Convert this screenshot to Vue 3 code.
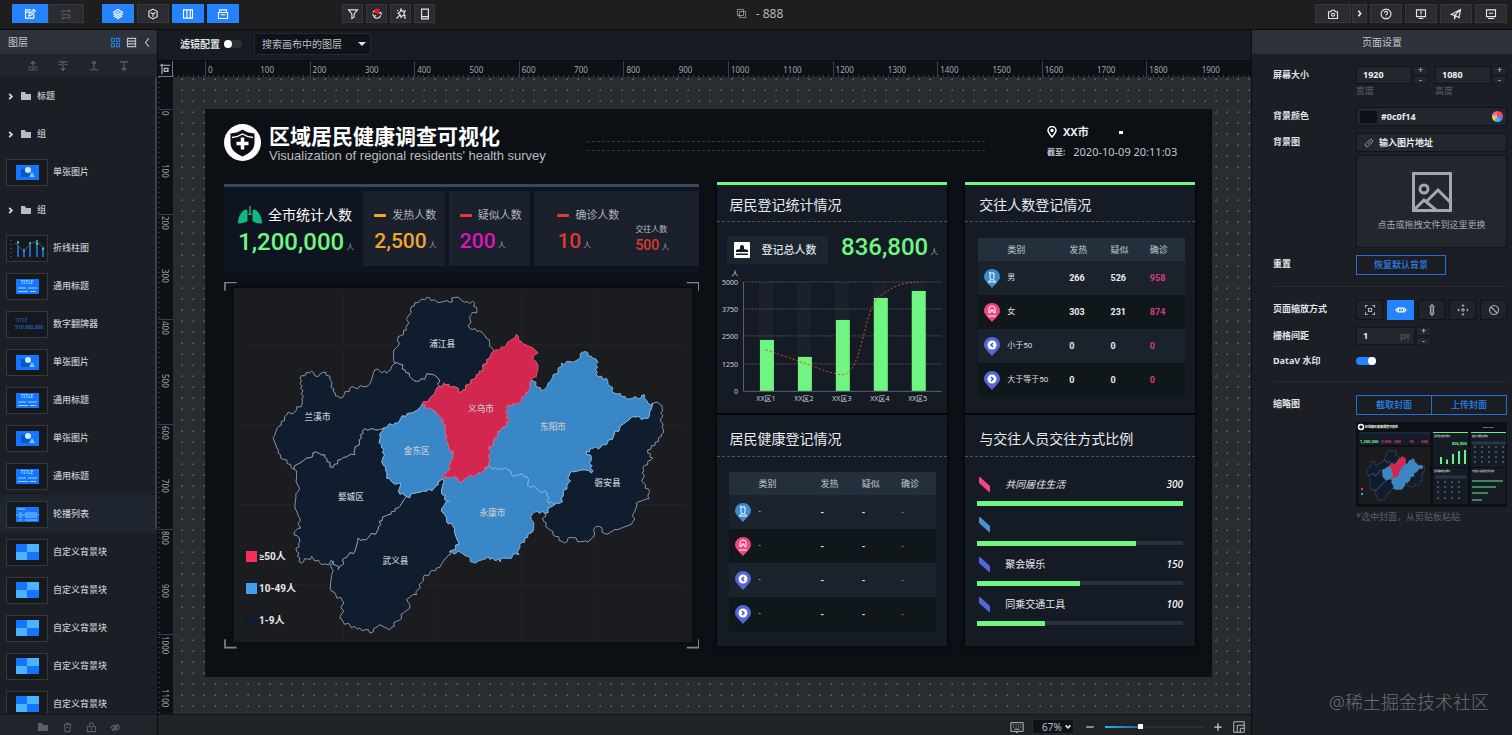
<script setup>
import { ref } from 'vue'

const icons = {
  edit: 'M13 8v5.5H2v-11h7M2 5.5h6M6 11l1-3 6-6 2 2-6 6-3 1',
  swap: 'M3 7V4h10l-2-2M13 9v4H3l2 2M3 9h10M13 4v2',
  layers: 'M8 2l6 3.5-6 3.5-6-3.500zM2 8l6 3.500 6-3.500M2 10.500l6 3.500 6-3.500M6 5.500h4',
  cube: 'M8 1.500l5.500 3v7L8 14.500l-5.500-3v-7zM5 6l3 2 3-2M8 8v4',
  columns: 'M2 2.500h12v11H2zM6.500 2.500v11M11 2.500v11',
  panel: 'M2 6h12v8H2zM3.500 6V2.500h9V6M5 9h6',
  funnel: 'M2 2.500h12L9.500 8v4L6.500 14V8z',
  sync: 'M3 6a5.500 5.500 0 0 1 8-3M13 10a5.500 5.500 0 0 1-9 2M2 8l2 3 3-1M14 9l-1-3-3 1',
  magic: 'M8 1.500l1.500 3 4-.5-2 3.500 2 3-3.500-.5-2 2.500-1-3.500L4 7l3-2zM6.500 9.500L2 14M3 3l1 1M12 12l2 2',
  tablet: 'M3.500 1.500h9v13h-9zM3.500 11.500h9',
  copy: 'M2 2h9v9H2zM5 5h9v9H5z',
  camera: 'M2 5h3l1-2h4l1 2h3v9H2zM8 7a2 2 0 1 0 .1 0',
  chevron: 'M6 3l4 5-4 5',
  help: 'M8 1.500a6.500 6.500 0 1 0 .1 0M6 6.500a2 2 0 1 1 3 1.700L8 9v1M8 11.500v1',
  alert: 'M2 2.500h12v9H2zM8 4v4M8 9v1M5 14h6',
  send: 'M1.500 8.500L14 2l-2 11-4-2.500zM14 2L6 10v4l2-3',
  screen: 'M2 2.500h12v9H2zM5 7h6M4 14h8',
  grid: 'M2 2h4.500v4.500H2zM9.500 2H14v4.500H9.500zM2 9.500h4.500V14H2zM9.500 9.500H14V14H9.500z',
  list: 'M2 2h12v12H2zM2 6h12M2 10h12',
  back: 'M10 2L5 8l5 6',
  toTop: 'M8 13V2M5 5l3-3 3 3M2 9.500h4M10 9.500h4M2 13h12',
  toBottom: 'M8 3v11M5 11l3 3 3-3M2 2.500h12M2 6h4M10 6h4',
  up: 'M8 12V2M5 5l3-3 3 3M2 13h12',
  down: 'M8 3v11M5 11l3 3 3-3M2 2.500h12',
  trash: 'M2 4h12M6 4V2h4v2M3.500 4l1 10h7l1-10M6.500 8h3',
  lock: 'M2 7h12v7H2zM5 7V4a3 3 0 0 1 6 0v3M8 9v3',
  hide: 'M1.500 8c3-5 10-5 13 0-3 5-10 5-13 0zM8 6a2 2 0 1 0 .1 0M3 13L13 3',
  link: 'M7 9l4-4M6 6l3-3a2.500 2.500 0 0 1 4 4l-3 3M10 10l-3 3a2.500 2.500 0 0 1-4-4l3-3',
  fit: 'M2 5V2h3M11 2h3v3M14 11v3h-3M5 14H2v-3M6 6h4v4H6z',
  width: 'M4.500 5L1 8l3.500 3M11.500 5L15 8l-3.500 3M4.500 5.500h7v5h-7zM8 7v2',
  height: 'M5 4l3-3 3 3M5 12l3 3 3-3M6 5h4v6H6zM8 7v2',
  spread: 'M6.500 3L8 1.500 9.500 3M6.500 13L8 14.500 9.500 13M3 6.500L1.500 8 3 9.500M13 6.500L14.500 8 13 9.500M8 6.500a1.500 1.500 0 1 0 .1 0',
  none: 'M8 2a6 6 0 1 0 .1 0M4 4l8 8',
  keyboard: 'M1 3h14v10H1zM3.500 5.500h1M6.500 5.500h1M9.500 5.500h1M12 5.500h1M3.500 8h1M6.500 8h1M9.500 8h1M12 8h1M5 10.500h6M7 14.500h2',
  minimap: 'M2 2h12v12H2zM6 14V6h8M9.500 14V9.500H14',
}

const leftTools = [
  { icon: 'layers', label: '图层', on: true },
  { icon: 'cube', label: '组件', on: false },
  { icon: 'columns', label: '右侧面板', on: true },
  { icon: 'panel', label: '工具栏', on: true },
]
const midTools = [
  { icon: 'funnel', label: '过滤' },
  { icon: 'sync', label: '同步', dot: true },
  { icon: 'magic', label: '效果' },
  { icon: 'tablet', label: '设备' },
]
const rightTools = [
  { icon: 'help', label: '帮助' },
  { icon: 'alert', label: '检查' },
  { icon: 'send', label: '发布' },
  { icon: 'screen', label: '预览' },
]

const layers = [
  ['group', '标题'], ['group', '组'], ['image', '单张图片'], ['group', '组'],
  ['chart', '折线柱图'], ['title', '通用标题'], ['digits', '数字翻牌器'], ['image', '单张图片'],
  ['title', '通用标题'], ['image', '单张图片'], ['title', '通用标题'], ['list', '轮播列表'],
  ['block', '自定义背景块'], ['block', '自定义背景块'], ['block', '自定义背景块'],
  ['block', '自定义背景块'], ['block', '自定义背景块'],
].map(([kind, name]) => ({ kind, name }))

const hTicks = Array.from({ length: 20 }, (_, i) => i * 100)
const vTicks = Array.from({ length: 12 }, (_, i) => i * 100)

const regionData = [
  { name: '浦江县', tone: 'dark', at: [667, 208], pts: '525,265 522,225 540,205 535,185 560,165 568,120 575,95 600,78 620,68 650,80 690,82 705,68 735,82 765,85 772,105 750,125 750,160 780,168 800,190 810,205 823,228 800,255 790,280 770,300 725,352 700,335 672,325 660,335 655,310 630,298 600,318 575,310 555,285 540,268' },
  { name: '兰溪市', tone: 'dark', at: [293, 425], pts: '525,265 540,268 555,285 575,310 600,318 630,298 655,310 660,335 640,362 607,388 570,415 525,445 490,460 460,462 435,462 418,495 405,540 370,548 340,578 320,560 315,540 290,532 260,550 222,583 175,535 160,488 175,455 200,420 230,405 248,380 240,310 275,288 295,305 318,292 335,320 340,350 360,370 390,340 445,332 465,285 500,295 515,275' },
  { name: '婺城区', tone: 'dark', at: [393, 668], pts: '222,583 260,550 290,532 315,540 320,560 340,578 370,548 405,540 418,495 435,462 460,462 490,460 480,480 485,510 495,540 490,570 500,610 520,625 542,625 540,658 560,665 535,700 505,720 478,740 475,765 440,795 415,790 405,830 375,850 355,885 340,860 305,870 275,845 245,865 230,830 240,800 222,780 243,760 225,700 235,650 230,610' },
  { name: '武义县', tone: 'dark', at: [527, 860], pts: '560,665 620,650 655,630 668,612 668,660 688,680 665,710 680,740 705,760 718,810 690,830 680,850 650,880 610,910 590,960 560,975 570,1000 530,1040 510,1065 480,1050 460,1072 420,1060 395,1060 360,1030 372,985 335,950 335,880 340,860 355,885 375,850 405,830 415,790 440,795 475,765 478,740 505,720 535,700' },
  { name: '磐安县', tone: 'dark', at: [1164, 625], pts: '1300,385 1315,382 1328,400 1325,430 1332,465 1325,485 1285,525 1300,550 1270,580 1272,625 1290,650 1288,672 1250,685 1240,740 1195,765 1165,778 1130,755 1125,775 1105,802 1045,790 1035,805 1000,780 972,740 975,715 1010,685 1020,685 1030,665 1045,625 1055,590 1095,585 1115,595 1115,550 1100,530 1120,520 1160,510 1200,460 1240,425 1275,430 1290,420' },
  { name: '金东区', tone: 'blue', at: [591, 530], pts: '607,388 640,405 665,430 678,450 678,480 685,510 700,540 690,580 668,612 655,630 620,650 560,665 540,658 542,625 520,625 500,610 490,570 495,540 485,510 480,480 490,460 525,445 570,415' },
  { name: '永康市', tone: 'blue', at: [818, 715], pts: '668,612 705,605 727,622 745,605 770,600 795,585 805,575 865,585 875,600 922,605 925,632 982,655 988,685 1010,685 975,715 945,712 935,735 940,770 900,810 898,840 850,850 842,862 805,845 768,865 730,838 690,830 718,810 705,760 680,740 665,710 688,680 668,660' },
  { name: '东阳市', tone: 'blue', at: [1000, 458], pts: '935,315 965,348 985,325 1000,300 1015,295 1025,265 1060,262 1098,230 1120,250 1135,262 1130,300 1165,320 1185,355 1230,372 1265,368 1275,360 1285,385 1300,385 1290,420 1275,430 1240,425 1200,460 1160,510 1120,520 1100,530 1115,550 1115,595 1095,585 1055,590 1045,625 1030,665 1020,685 1010,685 988,685 982,655 925,632 922,605 875,600 865,585 805,575 795,585 810,560 808,525 825,490 845,460 870,440 860,430 860,395 895,385 925,350' },
  { name: '义乌市', tone: 'red', at: [784, 403], pts: '823,228 860,210 890,178 905,200 930,215 955,235 940,255 955,280 950,305 935,315 925,350 895,385 860,395 860,430 870,440 845,460 825,490 808,525 810,560 795,585 770,600 745,605 727,622 705,605 668,612 690,580 700,540 685,510 678,480 678,450 665,430 640,405 607,388 640,362 660,335 672,325 700,335 725,352 770,300 790,280 800,255' },
]

// Roughens a straight border. Both neighbours of an edge get the same line.
function roughen(a, b) {
  const flip = a[0] > b[0] || (a[0] === b[0] && a[1] > b[1])
  const [p, q] = flip ? [b, a] : [a, b]
  const dx = q[0] - p[0]
  const dy = q[1] - p[1]
  const len = Math.hypot(dx, dy)
  const n = Math.max(1, Math.round(len / 8))
  const out = []
  for (let i = 1; i < n; i++) {
    const h = Math.abs(Math.sin(p[0] * 12.9 + p[1] * 78.2 + i * 37.7) * 43758.5) % 1
    const off = (h - 0.5) * 12
    out.push([p[0] + (dx * i) / n - (dy / len) * off, p[1] + (dy * i) / n + (dx / len) * off])
  }
  return flip ? out.reverse() : out
}
function toPath(text) {
  const pts = text.split(' ').map((s) => s.split(',').map(Number))
  const all = pts.flatMap((p, i) => [p, ...roughen(p, pts[(i + 1) % pts.length])])
  return 'M' + all.map((p) => p.map((v) => Math.round(v)).join(' ')).join('L') + 'Z'
}
const regions = regionData.map((r) => ({ ...r, d: toPath(r.pts) }))

const legend = [
  { tone: 'red', label: '≥50人' },
  { tone: 'blue', label: '10-49人' },
  { tone: 'dark', label: '1-9人' },
]

const stats = [
  { label: '发热人数', value: '2,500', tone: 'amber' },
  { label: '疑似人数', value: '200', tone: 'magenta' },
]

const bars = [
  { x: 49, h: 51, name: 'XX区1' },
  { x: 87, h: 34, name: 'XX区2' },
  { x: 125, h: 71, name: 'XX区3' },
  { x: 163, h: 93, name: 'XX区4' },
  { x: 201, h: 100, name: 'XX区5' },
]
const gridLines = [
  { y: 14, v: 5000 }, { y: 41, v: 3750 }, { y: 68, v: 2500 }, { y: 96, v: 1250 }, { y: 123, v: 0 },
]

const pins = ['male', 'female', 'less', 'more']
const contactRows = [
  ['男', '266', '526', '958'],
  ['女', '303', '231', '874'],
  ['小于50', '0', '0', '0'],
  ['大于等于50', '0', '0', '0'],
]
const healthRows = Array.from({ length: 4 }, () => ['-', '-', '-', '-'])

const ways = [
  { name: '共同居住生活', value: '300', pct: 100, tone: 'pink', slant: true },
  { name: '', value: '', pct: 77, tone: 'sky' },
  { name: '聚会娱乐', value: '150', pct: 50, tone: 'indigo' },
  { name: '同乘交通工具', value: '100', pct: 33, tone: 'indigo' },
]

const scaleModes = [
  { icon: 'fit', label: '全屏铺满' },
  { icon: 'width', label: '等比缩放宽度铺满', on: true },
  { icon: 'height', label: '等比缩放高度铺满' },
  { icon: 'spread', label: '等比缩放居中' },
  { icon: 'none', label: '不缩放' },
]

const filterOn = ref(false)
const markOn = ref(true)
const zoom = ref(35)
const thumbBars = [14, 9, 20, 26, 28]
</script>

<template>
  <div class="app">
    <header class="topbar">
      <div class="tb-left">
        <div class="seg">
          <button class="tool wide on" aria-label="编辑"><svg class="ic" viewBox="0 0 16 16"><path :d="icons.edit" /></svg></button>
          <button class="tool wide dim" aria-label="切换"><svg class="ic" viewBox="0 0 16 16"><path :d="icons.swap" /></svg></button>
        </div>
        <div class="tools">
          <button v-for="t in leftTools" :key="t.icon" class="tool" :class="{ on: t.on }" :aria-label="t.label">
            <svg class="ic" viewBox="0 0 16 16"><path :d="icons[t.icon]" /></svg>
          </button>
        </div>
        <div class="tools mid">
          <button v-for="t in midTools" :key="t.icon" class="tool small" :aria-label="t.label">
            <svg class="ic" viewBox="0 0 16 16"><path :d="icons[t.icon]" /><circle v-if="t.dot" cx="8" cy="4" r="3.500" class="alert-dot" /></svg>
          </button>
        </div>
      </div>
      <div class="doc"><svg class="ic" viewBox="0 0 16 16"><path :d="icons.copy" /></svg><span>- 888</span></div>
      <div class="tb-right">
        <div class="seg split">
          <button class="tool wide" aria-label="截图"><svg class="ic" viewBox="0 0 16 16"><path :d="icons.camera" /></svg></button>
          <button class="tool narrow" aria-label="更多"><svg class="ic bold" viewBox="0 0 16 16"><path :d="icons.chevron" /></svg></button>
        </div>
        <button v-for="t in rightTools" :key="t.icon" class="tool" :aria-label="t.label">
          <svg class="ic" viewBox="0 0 16 16"><path :d="icons[t.icon]" /></svg>
        </button>
      </div>
    </header>

    <div class="work">
      <aside class="layers">
        <div class="panel-head">
          <span>图层</span>
          <div class="head-icons">
            <button class="bare active" aria-label="缩略图模式"><svg class="ic" viewBox="0 0 16 16"><path :d="icons.grid" /></svg></button>
            <button class="bare" aria-label="列表模式"><svg class="ic" viewBox="0 0 16 16"><path :d="icons.list" /></svg></button>
            <button class="bare" aria-label="收起"><svg class="ic" viewBox="0 0 16 16"><path :d="icons.back" /></svg></button>
          </div>
        </div>
        <div class="order">
          <button v-for="k in ['toTop', 'toBottom', 'up', 'down']" :key="k" class="bare" :aria-label="k">
            <svg class="ic" viewBox="0 0 16 16"><path :d="icons[k]" /></svg>
          </button>
        </div>
        <ul class="layer-list">
          <li v-for="(l, i) in layers" :key="i" :class="['layer', { current: l.kind === 'list' }]">
            <template v-if="l.kind === 'group'">
              <svg class="caret" viewBox="0 0 6 10"><path d="M1 2l3 3-3 3" /></svg>
              <svg class="folder" viewBox="0 0 12 10"><path d="M1 1h4l1 2h5v6H1z" /></svg>
            </template>
            <svg v-else class="thumb" viewBox="0 0 42 27">
              <rect x="0.500" y="0.500" width="41" height="26" class="thumb-box" />
              <g v-if="l.kind === 'image'">
                <rect x="10" y="6" width="23" height="15" fill="#1476ff" />
                <rect x="15" y="10" width="9" height="8" fill="#0a56c8" />
                <circle cx="22" cy="11" r="3" fill="#c9ecff" /><path d="M23 18l3-5 3 5z" fill="#7cc8ff" />
              </g>
              <g v-else-if="l.kind === 'title'">
                <rect x="10" y="6" width="23" height="15" fill="#1476ff" />
                <text x="21" y="11" class="tiny">TITLE</text>
                <path d="M12 15h8M22 15h9M12 18.500h10M24 18.500h6" stroke="#9ed4ff" />
              </g>
              <g v-else-if="l.kind === 'list'">
                <rect x="10" y="6" width="23" height="15" fill="#1476ff" />
                <path d="M11 8h8M13 12h3M19 12h12M13 16h3M19 16h12M13 19h3M19 19h12" stroke="#8ecbff" />
                <path d="M10 14h23" stroke="#41a3ff" stroke-width="2" />
              </g>
              <g v-else-if="l.kind === 'digits'">
                <text x="9" y="11" class="tiny blue">TITLE</text><text x="9" y="18" class="tiny blue bigger">510 000,000</text>
              </g>
              <g v-else-if="l.kind === 'chart'">
                <path d="M5 5v17" stroke="#66707a" stroke-dasharray="1 3" />
                <path d="M12 10v12M18 15v7M24 8v14M31 6v16M37 13v9" stroke="#1b82ee" stroke-width="1.500" />
                <path d="M12 6v3M24 7v3M31 5v5M18 14v3M37 12v3" stroke="#63dcb2" stroke-width="1.500" />
                <path d="M9 8l3 3 6 5 6-7 7-3 6 7" stroke="#35566d" fill="none" />
              </g>
              <g v-else>
                <path d="M10 5h11v8H10zM21 13h12v8H21z" fill="#1476ff" />
                <path d="M21 5h12v8H21zM10 13h11v8H10z" fill="#4bb3ff" />
              </g>
            </svg>
            <span>{{ l.name }}</span>
          </li>
        </ul>
        <div class="layer-foot">
          <button class="bare" aria-label="成组"><svg class="folder" viewBox="0 0 12 10"><path d="M1 1h4l1 2h5v6H1z" /></svg></button>
          <button v-for="k in ['trash', 'lock', 'hide']" :key="k" class="bare" :aria-label="k">
            <svg class="ic" viewBox="0 0 16 16"><path :d="icons[k]" /></svg>
          </button>
        </div>
      </aside>

      <main class="center">
        <div class="filterbar">
          <label class="filter-label">滤镜配置<input v-model="filterOn" class="switch" type="checkbox" /></label>
          <div class="pick">
            <select aria-label="搜索画布中的图层"><option>搜索画布中的图层</option></select>
            <svg viewBox="0 0 10 6"><path d="M1 1h8L5 5z" /></svg>
          </div>
        </div>
        <div class="stage">
          <div class="corner"><svg class="ic" viewBox="0 0 16 16"><path d="M1 3h14M4 1v14M7 6v6M12 6v6M7 9c1-3 4-3 5 0-1 3-4 3-5 0" /></svg></div>
          <div class="hruler"><div class="htrack"><span v-for="n in hTicks" :key="n" :class="{ major: n % 200 === 0 }">{{ n }}</span></div></div>
          <div class="vruler"><div class="vtrack"><span v-for="n in vTicks" :key="n" :class="{ major: n % 200 === 0 }">{{ n }}</span></div></div>
          <div class="canvas">
            <article class="board">
              <header class="b-head">
                <svg class="logo" viewBox="0 0 37 37">
                  <circle cx="18.500" cy="18.500" r="18.500" fill="#fff" />
                  <path d="M18.500 5.500c4 3 8 3.500 12 4v9c0 7-5 11-12 14-7-3-12-7-12-14v-9c4-.5 8-1 12-4z" fill="#0c0f14" />
                  <path d="M8 13.500c4-.5 7.500-1.500 10.500-3.500 3 2 6.500 3 10.500 3.500" fill="none" stroke="#fff" stroke-width="1.500" />
                  <path d="M18.500 13.500v12M12.500 19.500h12" stroke="#fff" stroke-width="3.500" />
                </svg>
                <div class="titles">
                  <h1>区域居民健康调查可视化</h1>
                  <p>Visualization of regional residents' health survey</p>
                </div>
                <div class="dots"></div>
                <div class="place">
                  <p class="city"><svg viewBox="0 0 10 12"><path d="M5 11C2 7.500 1 6 1 4.500a4 4 0 0 1 8 0C9 6 8 7.500 5 11z" /><circle cx="5" cy="4.500" r="1" /></svg><b>XX市</b><i></i></p>
                  <p class="until"><b>截至:</b><span>2020-10-09 20:11:03</span></p>
                </div>
              </header>

              <div class="b-body">
                <div class="col-main">
                  <section class="stats">
                    <div class="total">
                      <p class="total-label">
                        <svg viewBox="0 0 24 18"><path d="M9.500 5v10c-1 1-4 2-8 2.500-1 .2-1.500-.2-1.500-1C0 12 3 6 6 4c2-1 3.500-.5 3.500 1zM14.500 5v10c1 1 4 2 8 2.500 1 .2 1.500-.2 1.500-1C24 12 21 6 18 4c-2-1-3.500-.5-3.500 1zM11.300 0h1.400v7l1.500 2h-4.400l1.500-2z" /></svg>
                        全市统计人数
                      </p>
                      <p class="num green big">1,200,000<small>人</small></p>
                    </div>
                    <div v-for="s in stats" :key="s.label" class="stat">
                      <p class="stat-label" :class="s.tone"><i></i>{{ s.label }}</p>
                      <p class="num" :class="s.tone">{{ s.value }}<small>人</small></p>
                    </div>
                    <div class="stat last">
                      <div>
                        <p class="stat-label red"><i></i>确诊人数</p>
                        <p class="num red">10<small>人</small></p>
                      </div>
                      <div class="sub">
                        <p>交往人数</p>
                        <p class="num red mini">500<small>人</small></p>
                      </div>
                    </div>
                  </section>
                  <section class="mapbox">
                    <svg class="map" viewBox="12 21 1428 1101">
                      <rect x="39" y="37" width="1382" height="1068" class="map-bg" />
                      <path class="map-grid" d="M80 210H1400M50 450H1400M50 690H1400M80 930H1400M370 45V1100M655 45V1100M905 45V1100M1125 45V1100" />
                      <path v-for="r in regions" :key="r.name" :d="r.d" :class="['region', r.tone]" />
                      <text v-for="r in regions" :key="r.name + 't'" :x="r.at[0]" :y="r.at[1] + 9" class="region-name">{{ r.name }}</text>
                      <path class="corner-lines" d="M15 47V22H50M1402 22H1438V47M15 1094V1119H50M1402 1119H1438V1094" />
                    </svg>
                    <ul class="legend">
                      <li v-for="g in legend" :key="g.label"><i :class="g.tone"></i>{{ g.label }}</li>
                    </ul>
                  </section>
                </div>

                <div class="col-side">
                  <section class="card top">
                    <h2>居民登记统计情况</h2>
                    <div class="sum">
                      <div class="sum-tag">
                        <svg viewBox="0 0 16 16"><rect width="16" height="16" rx="1" fill="#fff" /><path d="M2 10V8l4-1V5a2 2 0 1 1 4 0v2l4 1v2zM2 11.500h12v1.500H2z" fill="#131a24" /></svg>
                        登记总人数
                      </div>
                      <p class="num green big">836,800<small>人</small></p>
                    </div>
                    <svg class="chart" viewBox="0 0 230 137">
                      <rect v-for="b in bars" :key="'s' + b.x" :x="b.x - 7" y="14" width="14" height="109" class="shade" />
                      <path v-for="g in gridLines.slice(0, 4)" :key="'l' + g.v" :d="`M26 ${g.y}H225`" class="gline" />
                      <path d="M26.500 14v109.500H225" class="axis" />
                      <rect v-for="b in bars" :key="b.x" :x="b.x - 6" :y="123 - b.h" width="14" :height="b.h" class="bar" />
                      <path d="M49 82C62 86 75 91 87 95C100 100 112 105 125 107C147 107 146 35 165 27C177 17 190 14 202 14" class="trend" />
                      <text v-for="g in gridLines" :key="g.v" x="21" :y="g.y + 3" text-anchor="end">{{ g.v }}</text>
                      <text v-for="b in bars" :key="b.name" :x="b.x" y="133" text-anchor="middle">{{ b.name }}</text>
                      <text x="18" y="8" text-anchor="middle">人</text>
                    </svg>
                  </section>
                  <section class="card">
                    <h2>居民健康登记情况</h2>
                    <table class="data">
                      <thead><tr><th>类别</th><th>发热</th><th>疑似</th><th>确诊</th></tr></thead>
                      <tbody>
                        <tr v-for="(row, i) in healthRows" :key="i">
                          <td><div class="cat">
                            <svg viewBox="0 0 16 19" :class="pins[i]">
                              <path class="pin" d="M8 19C3 13.500 0 11 0 8a8 8 0 0 1 16 0c0 3-3 5.500-8 11z" />
                              <path v-if="i === 0" class="sign" d="M5 3l1 1h4v5a2 2 0 0 1-4 0V4M4 13h8M6 11l-1 2M10 11l1 2" />
                              <path v-else-if="i === 1" class="sign" d="M5 10V6a3 3 0 0 1 6 0v4l-2-1V7H7v2zM4 13h8" />
                              <g v-else><circle cx="8" cy="8" r="4.500" fill="#fff" /><path class="arrow" :d="i === 2 ? 'M9 6L7 8l2 2' : 'M7 6l2 2-2 2'" /></g>
                            </svg>{{ row[0] }}</div></td>
                          <td>{{ row[1] }}</td><td>{{ row[2] }}</td><td>{{ row[3] }}</td>
                        </tr>
                      </tbody>
                    </table>
                  </section>
                </div>

                <div class="col-side">
                  <section class="card top">
                    <h2>交往人数登记情况</h2>
                    <table class="data">
                      <thead><tr><th>类别</th><th>发热</th><th>疑似</th><th>确诊</th></tr></thead>
                      <tbody>
                        <tr v-for="(row, i) in contactRows" :key="i">
                          <td><div class="cat">
                            <svg viewBox="0 0 16 19" :class="pins[i]">
                              <path class="pin" d="M8 19C3 13.500 0 11 0 8a8 8 0 0 1 16 0c0 3-3 5.500-8 11z" />
                              <path v-if="i === 0" class="sign" d="M5 3l1 1h4v5a2 2 0 0 1-4 0V4M4 13h8M6 11l-1 2M10 11l1 2" />
                              <path v-else-if="i === 1" class="sign" d="M5 10V6a3 3 0 0 1 6 0v4l-2-1V7H7v2zM4 13h8" />
                              <g v-else><circle cx="8" cy="8" r="4.500" fill="#fff" /><path class="arrow" :d="i === 2 ? 'M9 6L7 8l2 2' : 'M7 6l2 2-2 2'" /></g>
                            </svg>{{ row[0] }}</div></td>
                          <td>{{ row[1] }}</td><td>{{ row[2] }}</td><td>{{ row[3] }}</td>
                        </tr>
                      </tbody>
                    </table>
                  </section>
                  <section class="card">
                    <h2>与交往人员交往方式比例</h2>
                    <ul class="ways">
                      <li v-for="(w, i) in ways" :key="i">
                        <div class="way-row" :class="{ slant: w.slant }">
                          <svg viewBox="0 0 11 15" :class="w.tone"><path d="M0 0h1l10 9v6h-1L0 6z" /></svg>
                          <span>{{ w.name }}</span><em>{{ w.value }}</em>
                        </div>
                        <div class="way-bar"><i :style="{ width: w.pct + '%' }"></i></div>
                      </li>
                    </ul>
                  </section>
                </div>
              </div>
            </article>
          </div>
        </div>
        <footer class="zoombar">
          <button class="bare" aria-label="快捷键"><svg class="ic" viewBox="0 0 16 16"><path :d="icons.keyboard" /></svg></button>
          <div class="pick zoom-pick">
            <select aria-label="缩放比例"><option>67%</option></select>
            <svg viewBox="0 0 10 6"><path d="M2 1l3 3 3-3" class="open" /></svg>
          </div>
          <button class="bare sign-btn" aria-label="缩小"><svg class="ic" viewBox="0 0 16 16"><path d="M2 8h12" /></svg></button>
          <input v-model="zoom" class="range" type="range" min="0" max="100" aria-label="缩放" />
          <button class="bare sign-btn" aria-label="放大"><svg class="ic" viewBox="0 0 16 16"><path d="M2 8h12M8 2v12" /></svg></button>
          <button class="bare" aria-label="小地图"><svg class="ic" viewBox="0 0 16 16"><path :d="icons.minimap" /></svg></button>
        </footer>
      </main>

      <aside class="props">
        <div class="props-head">页面设置</div>
        <form class="form" @submit.prevent>
          <div class="row">
            <label for="w">屏幕大小</label>
            <div class="sizes">
              <div class="size">
                <div class="numbox"><input id="w" value="1920" /><span class="steps"><button type="button" aria-label="增加">+</button><button type="button" aria-label="减少">-</button></span></div>
                <small>宽度</small>
              </div>
              <div class="size">
                <div class="numbox"><input value="1080" aria-label="高度" /><span class="steps"><button type="button" aria-label="增加">+</button><button type="button" aria-label="减少">-</button></span></div>
                <small>高度</small>
              </div>
            </div>
          </div>
          <div class="row gap-l">
            <label for="bg">背景颜色</label>
            <div class="field"><i class="swatch"></i><input id="bg" value="#0c0f14" /><i class="wheel"></i></div>
          </div>
          <div class="row">
            <label for="img">背景图</label>
            <div class="stack">
              <div class="field link"><svg class="ic" viewBox="0 0 16 16"><path :d="icons.link" /></svg><input id="img" placeholder="输入图片地址" /></div>
              <button type="button" class="drop">
                <svg viewBox="0 0 40 40"><path d="M1.500 1.500h37v37h-37zM2 38l10-10 12 10M14 30l12-12 12 12" /><circle cx="12" cy="17" r="4" /></svg>
                点击或拖拽文件到这里更换
              </button>
            </div>
          </div>
          <div class="row">
            <span class="name">重置</span>
            <button type="button" class="outline reset">恢复默认背景</button>
          </div>
          <hr />
          <div class="row">
            <span class="name">页面缩放方式</span>
            <div class="modes">
              <button v-for="m in scaleModes" :key="m.icon" type="button" :class="{ on: m.on }" :aria-label="m.label">
                <svg class="ic" viewBox="0 0 16 16"><path :d="icons[m.icon]" /></svg>
              </button>
            </div>
          </div>
          <div class="row">
            <label for="grid">栅格间距</label>
            <div class="numbox spacing"><input id="grid" value="1" /><span class="unit">px</span><span class="steps"><button type="button" aria-label="增加">+</button><button type="button" aria-label="减少">-</button></span></div>
          </div>
          <div class="row">
            <label for="mark">DataV 水印</label>
            <input id="mark" v-model="markOn" class="switch mark" type="checkbox" />
          </div>
          <hr class="second" />
          <div class="row">
            <span class="name">缩略图</span>
            <div class="stack cover">
              <div class="pair"><button type="button" class="outline">截取封面</button><button type="button" class="outline">上传封面</button></div>
              <svg class="preview" viewBox="0 0 151 85">
                <rect width="151" height="85" fill="#0c0f14" />
                <circle cx="5" cy="5" r="2.500" fill="none" stroke="#fff" stroke-width="1.500" />
                <text x="9" y="6" class="pv-title">区域居民健康调查可视化</text>
                <text x="127" y="6" class="pv-text">2020-10-09</text>
                <path d="M3 11h71" stroke="#2d4257" /><rect x="3" y="12" width="71" height="11" fill="#151b28" />
                <text x="4" y="21" class="pv-num">1,200,000</text>
                <text x="25" y="21" class="pv-num pk">2,500</text><text x="38" y="21" class="pv-num pk">200</text>
                <text x="53" y="21" class="pv-num pk">10</text><text x="65" y="21" class="pv-num pk">500</text>
                <rect x="3" y="25" width="71" height="57" fill="#1a1b1f" />
                <svg x="3" y="26" width="71" height="55" viewBox="12 21 1428 1101"><path v-for="r in regions" :key="r.name" :d="r.d" :class="['region', r.tone]" /></svg>
                <path d="M5 67h2" stroke="#f72e5c" stroke-width="2" /><path d="M5 72h2" stroke="#439fed" stroke-width="2" />
                <g v-for="x in [77, 115]" :key="x">
                  <rect :x="x" y="10" width="35" height="35" fill="#151c26" /><rect :x="x" y="46" width="35" height="36" fill="#151c26" />
                  <path :d="`M${x} 10.500h35`" stroke="#6ff081" />
                </g>
                <text x="78" y="15" class="pv-text">居民登记统计情况</text><text x="116" y="15" class="pv-text">交往人数登记情况</text>
                <text x="78" y="50" class="pv-text">居民健康登记情况</text><text x="116" y="50" class="pv-text">与交往人员交往方式比例</text>
                <text x="96" y="23" class="pv-num">836,800</text>
                <rect v-for="(h, i) in thumbBars" :key="i" :x="84 + i * 6" :y="42 - h / 2" width="2" :height="h / 2" fill="#6ff081" />
                <path d="M116 21h34M79 55h31" stroke="#2a3443" stroke-width="3" />
                <path d="M118 25h31M118 30h31M118 35h31M118 40h31M81 60h28M81 65h28M81 70h28M81 76h28" stroke="#7b8795" stroke-dasharray="2 5" />
                <path d="M116 59h31M116 65h24M116 71h16M116 78h10" stroke="#6ff081" />
              </svg>
              <small>*选中封面，从剪贴板粘贴</small>
            </div>
          </div>
        </form>
        <p class="watermark">@稀土掘金技术社区</p>
      </aside>
    </div>
  </div>
</template>

<style>
html, body { margin: 0; background: #1b1e23; }
</style>

<style scoped>
.app { height: 100vh; display: flex; flex-direction: column; overflow: hidden; background: #0c0e12; color: #c3c7cd; font: 10px/14px "Noto Sans", "Noto Sans CJK SC", sans-serif; }
* { box-sizing: border-box; }
p, h1, h2, ul { margin: 0; padding: 0; }
ul { list-style: none; }
button, input, select { font: inherit; color: inherit; margin: 0; padding: 0; border: 0; border-radius: 0; background: none; min-width: 0; outline: none; }
button { cursor: pointer; display: flex; align-items: center; justify-content: center; }
svg { display: block; flex: none; }
.ic { width: 12px; height: 12px; fill: none; stroke: currentColor; stroke-width: 1.5; }
.ic.bold { stroke-width: 3; width: 9px; height: 9px; }

.topbar { flex: none; height: 29px; padding: 0 5px 2px 12px; background: #1e1e1e; display: grid; grid-template-columns: 1fr auto 1fr; align-items: center; }
.tb-left, .tb-right, .tools, .seg { display: flex; align-items: center; }
.tb-left { gap: 18px; }
.tools { gap: 3px; }
.tools.mid { margin-left: 85px; }
.tb-right { gap: 3px; justify-content: flex-end; }
.split { gap: 1px; }
.tool { width: 32px; height: 19px; background: #2b2c31; border: 1px solid #36383e; color: #e5e7ea; }
.tool.wide { width: 36px; }
.tool.small { width: 21px; }
.tool.narrow { width: 15px; }
.tool.on { background: #2483ff; border-color: #2483ff; color: #fff; }
.tool.dim { color: #5b5e64; }
.alert-dot { fill: #f0161c; stroke: none; }
.doc { display: flex; align-items: center; gap: 9px; color: #b4b7bb; font-size: 12px; }
.doc .ic { width: 11px; height: 11px; stroke-width: 1; }

.work { flex: 1; min-height: 0; margin-top: 1px; display: grid; grid-template-columns: 157px minmax(0, 1fr) 260px; gap: 1px; }
.layers { background: #1b1f25; display: flex; flex-direction: column; min-height: 0; overflow: hidden; position: relative; }
.layers::after { content: ""; position: absolute; right: 0; top: 47px; height: 452px; width: 2px; background: #3d4047; }
.panel-head { flex: none; height: 24px; padding: 0 4px 0 8px; background: #2c313a; display: flex; align-items: center; justify-content: space-between; font-size: 10px; }
.head-icons { display: flex; gap: 4px; }
.bare { width: 12px; height: 14px; }
.head-icons .ic { width: 11px; height: 11px; }
.active { color: #2b7de2; }
.order { flex: none; height: 23px; padding: 0 27px; background: #20252b; color: #59606a; display: flex; align-items: center; justify-content: space-between; }
.layer-list { flex: 1; min-height: 0; overflow: hidden; }
.layer { height: 38px; padding-left: 6px; display: flex; align-items: center; gap: 5px; font-size: 9px; font-weight: 500; }
.layer.current { background: #1f252e; }
.caret { width: 6px; height: 9px; margin-left: 2px; fill: none; stroke: #d5d8dc; stroke-width: 2; }
.folder { width: 12px; height: 10px; fill: #b7bcc3; margin-left: 1px; }
.thumb { width: 42px; height: 27px; fill: none; }
.thumb-box { fill: #15181c; stroke: #34383d; }
.tiny { font-size: 5px; fill: #bfe2ff; text-anchor: middle; }
.tiny.blue { fill: #1a5fb5; text-anchor: start; }
.bigger { font-size: 5px; font-weight: 700; }
.layer-foot { flex: none; height: 21px; padding: 4px 0 0 37px; display: flex; align-items: center; gap: 12px; border-top: 1px solid #14171b; background: #20252b; color: #59606a; }
.layer-foot .folder { fill: #59606a; margin: 0; }
.layer-foot .ic { width: 11px; height: 11px; }

.center { display: flex; flex-direction: column; min-width: 0; min-height: 0; }
.filterbar { flex: none; height: 31px; padding: 0 0 2px 22px; background: #181b21; border-bottom: 1px solid #090b0e; display: flex; align-items: center; gap: 12px; }
.filter-label { display: flex; align-items: center; gap: 4px; font-weight: 700; color: #dfe2e6; }
.switch { appearance: none; width: 18px; height: 8px; border-radius: 4px; background: #2a3038; display: flex; align-items: center; }
.switch::before { content: ""; width: 8px; height: 8px; border-radius: 50%; background: #fff; }
.switch:checked { background: #2483ff; justify-content: flex-end; }
.pick { position: relative; display: flex; align-items: center; }
.pick select { appearance: none; width: 117px; height: 22px; padding-left: 7px; background: #0f1216; border: 1px solid #24282e; font-size: 10px; color: #b9bdc3; }
.pick svg { position: absolute; right: 4px; width: 10px; height: 6px; fill: #dfe2e6; pointer-events: none; }
.pick .open { fill: none; stroke: #dfe2e6; stroke-width: 2; }

.stage { flex: 1; min-height: 0; display: grid; grid-template-columns: 15px minmax(0, 1fr); grid-template-rows: 16px minmax(0, 1fr); background: #0d1014; }
.corner { border-right: 1px solid #70757c; border-bottom: 1px solid #70757c; display: grid; place-items: center; color: #b5b9bf; }
.hruler { background: repeating-linear-gradient(90deg, #3a3e44 0 1px, transparent 1px 5px) bottom / 100% 2px no-repeat; overflow: hidden; }
.htrack { margin-left: 32px; height: 100%; display: flex; }
.htrack span { flex: 1; min-width: 0; padding-left: 2px; font-size: 8px; line-height: 17px; color: #a4a8ae; border-left: 1px solid transparent; }
.htrack .major { border-color: #3b4047; }
.vruler { background: repeating-linear-gradient(180deg, #3a3e44 0 1px, transparent 1px 5px) left / 2px 100% no-repeat; overflow: hidden; }
.vtrack { margin-top: 32px; height: calc(100% - 32px); display: flex; flex-direction: column; }
.vtrack span { flex: 0 0 8.68%; writing-mode: vertical-rl; padding-top: 1px; font-size: 8px; line-height: 15px; color: #a4a8ae; border-top: 1px solid transparent; }
.vtrack .major { border-color: #3b4047; }
.canvas { overflow: hidden; padding: 32px 39px 0 32px; background: radial-gradient(circle at 50% 50%, #575a5f 0, #575a5f 1px, transparent 1px) 4px 8px / 11px 11px, #292c31; }

.board { background: #0c0f14; padding: 15px 17px 28px 19px; color: #e7eaee; }
.b-head { height: 58px; display: flex; align-items: flex-start; }
.logo { width: 37px; height: 37px; }
.titles { width: 278px; margin-left: 8px; white-space: nowrap; }
.titles h1 { font-size: 21px; line-height: 24px; font-weight: 700; color: #fff; }
.titles p { font: 13px/16px "Liberation Sans", sans-serif; color: #b9bcc0; }
.dots { flex: 1; margin: 17px 62px 0 40px; height: 10px; border: dashed #34383d; border-width: 1px 0; }
.place { width: 148px; white-space: nowrap; }
.city { display: flex; align-items: center; gap: 6px; font-size: 11px; line-height: 16px; }
.city svg { width: 10px; height: 12px; fill: none; stroke: #fff; stroke-width: 1.5; }
.city i { margin-left: 24px; width: 4px; height: 3px; background: #fff; }
.until { display: flex; gap: 8px; align-items: center; font-size: 11px; line-height: 16px; margin-top: 4px; color: #c3c6ca; }
.until b { font-size: 8px; }

.b-body { display: grid; grid-template-columns: 476fr 230fr 230fr; gap: 18px; }
.col-main, .col-side { display: flex; flex-direction: column; min-width: 0; }
.col-side { gap: 2px; }
.stats { margin-top: 2px; height: 89px; border-top: 3px solid #34495d; background: #0f1520; padding: 4px 0 7px; display: grid; grid-template-columns: 136fr 82fr 82fr 166fr; gap: 4px; }
.total { padding: 14px 0 0 14px; }
.total-label { display: flex; align-items: center; gap: 6px; font-size: 14px; line-height: 20px; color: #fff; white-space: nowrap; }
.total-label svg { width: 24px; height: 18px; fill: #10b981; }
.stat { background: #1a202c; padding: 16px 0 0 11px; white-space: nowrap; }
.stat-label { display: flex; align-items: center; gap: 6px; font-size: 11px; line-height: 16px; color: #b0b5bc; }
.stat-label i { width: 12px; height: 3px; background: #e83a30; border-radius: 1px; }
.stat-label.amber i { background: #f5a623; }
.num { font-family: Roboto, "Noto Sans CJK SC", sans-serif; font-weight: 500; font-size: 21px; line-height: 36px; display: flex; align-items: baseline; white-space: nowrap; }
.num small { font-size: 8px; color: #9aa0a8; margin-left: 2px; font-weight: 400; }
.num.big { font-size: 24px; line-height: 34px; }
.num.mini { font-size: 14px; line-height: 18px; }
.num.green { color: #70f582; }
.num.amber { color: #f0a52c; }
.num.magenta { color: #dc16bb; }
.num.red { color: #dc3a32; }
.stat.last { display: flex; gap: 16px; padding-left: 23px; }
.sub { padding-top: 15px; font-size: 8px; line-height: 14px; color: #b9bdc3; }

.mapbox { flex: 1; margin-top: 9px; position: relative; }
.map { width: 100%; height: auto; }
.map-bg { fill: #1b1c1f; stroke: #0a0c10; stroke-width: 4; }
.map-grid { fill: none; stroke: #212225; stroke-width: 4; }
.corner-lines { fill: none; stroke: #80858a; stroke-width: 5; }
.region { stroke: #8d97a3; stroke-width: 3; stroke-linejoin: round; }
.region.dark { fill: #101d2f; }
.region.blue { fill: #3a87c8; stroke: #7db4dc; }
.region.red { fill: #d3274f; stroke: #df5675; }
.region-name { font-size: 26px; font-weight: 500; fill: #c3c8ce; text-anchor: middle; }
.legend { position: absolute; left: 22px; bottom: 20px; display: flex; flex-direction: column; gap: 16px; font: 700 10px/16px Roboto, "Noto Sans CJK SC", sans-serif; }
.legend li { display: flex; align-items: center; gap: 2px; }
.legend i { width: 11px; height: 11px; }
.legend .red { background: #f72e5c; }
.legend .blue { background: #439fed; }
.legend .dark { background: #101b30; }

.card { background: #151b25; height: 231px; box-shadow: 0 0 3px 1px #05070a; }
.card.top { border-top: 3px solid #70f582; }
.card h2 { height: 42px; padding: 6px 0 0 12px; font-size: 14px; line-height: 36px; font-weight: 400; color: #e7eaee; border-bottom: 1px dashed #4e545c; }
.card.top h2 { height: 37px; padding-top: 2px; }
.col-side:last-child h2 { padding-left: 14px; }
.sum { display: flex; align-items: center; justify-content: space-between; height: 42px; padding: 14px 9px 0 10px; }
.sum-tag { width: 101px; height: 28px; padding-left: 7px; background: #1c242f; display: flex; align-items: center; gap: 11px; font-size: 11px; font-weight: 500; color: #dfe3e8; }
.sum-tag svg { width: 16px; height: 16px; }
.sum .num { line-height: 28px; }
.chart { width: 100%; height: auto; margin-top: 4px; }
.chart text { font-size: 7px; fill: #cdd2d8; }
.shade { fill: #1a212a; }
.gline { stroke: #464d56; stroke-dasharray: 2 1; }
.axis { fill: none; stroke: #5a626c; }
.bar { fill: #70f582; }
.trend { fill: none; stroke: #d9482f; stroke-dasharray: 2 2; }

.data { width: calc(100% - 23px); margin: 16px 0 0 13px; border-collapse: collapse; table-layout: fixed; font-size: 9px; line-height: 12px; }
.card:not(.top) .data { margin: 15px 0 0 12px; }
.data th, .data td { padding: 0; text-align: left; }
.data th { height: 23px; background: #242f3c; color: #aab0b8; font-weight: 500; }
.data th:first-child { width: 44%; padding-left: 29px; }
.data th:nth-child(2) { width: 20%; }
.data th:nth-child(3) { width: 19%; }
.data td { height: 34px; font-family: Roboto, "Noto Sans CJK SC", sans-serif; font-weight: 700; color: #e9ecef; }
.data tr:nth-child(odd) td { background: #1a232c; }
.data tr:nth-child(even) td { background: #10171b; }
.data td:last-child { color: #d83a80; }
.card:not(.top) .data td:last-child { color: #9a5260; }
.cat { display: flex; align-items: center; gap: 7px; padding-left: 6px; font-size: 8px; font-weight: 400; color: #d9dde2; }
.cat svg { width: 16px; height: 19px; }
.pin { fill: #5466d8; }
.male .pin { fill: #3c8bcb; }
.female .pin { fill: #f54482; }
.sign { fill: none; stroke: #fff; stroke-width: 1; }
.arrow { fill: none; stroke: #3c4fcf; stroke-width: 1.5; }

.ways { padding: 17px 12px 0; }
.ways li { height: 40px; }
.way-row { height: 20px; padding-left: 2px; display: flex; align-items: center; }
.way-row svg { width: 11px; height: 15px; margin-right: 15px; }
.way-row span { flex: 1; }
.way-row em { font-weight: 500; color: #fff; }
.slant span { font-style: italic; }
.pink { fill: #f54482; }
.sky { fill: #4592cf; }
.indigo { fill: #5466d8; }
.way-bar { height: 4px; margin-top: 7px; background: #2b313b; }
.way-bar i { display: block; height: 5px; background: #70f582; }

.zoombar { flex: none; height: 21px; padding: 3px 6px 0 0; background: #1f2326; border-top: 1px solid #121519; display: flex; align-items: center; justify-content: flex-end; gap: 9px; color: #c9cdd2; }
.zoombar .ic { width: 14px; height: 14px; stroke-width: 1; }
.zoombar .sign-btn .ic { width: 10px; height: 10px; stroke-width: 2; }
.zoom-pick select { width: 42px; height: 15px; padding-left: 9px; line-height: 12px; }
.zoom-pick svg { right: 2px; width: 8px; }
.zoom-pick { margin-right: 1px; }
.range { appearance: none; width: 98px; height: 6px; background: linear-gradient(90deg, #20b7f2, #2a5f9f 35%, #2a3037 35%) center / 100% 2px no-repeat; }
.range::-webkit-slider-thumb { appearance: none; width: 5px; height: 5px; background: #fff; }

.props { background: #1b1e24; display: flex; flex-direction: column; min-height: 0; overflow: hidden; position: relative; }
.props-head { flex: none; height: 24px; background: #2c313a; text-align: center; line-height: 24px; }
.form { padding: 12px 5px 0 21px; display: flex; flex-direction: column; gap: 7px; font-size: 9px; }
.row { display: grid; grid-template-columns: 83px minmax(0, 1fr); align-items: start; }
.row.gap-l { margin-top: 2px; }
.row > label, .row > .name { line-height: 18px; font-weight: 700; color: #dfe2e6; white-space: nowrap; }
.sizes { display: grid; grid-template-columns: 1fr 1fr; gap: 7px; }
.numbox { display: flex; height: 18px; gap: 1px; position: relative; }
.numbox input { flex: 1; width: 0; padding-left: 6px; background: #22272e; border: 1px solid #101317; font-weight: 700; color: #eef0f2; }
.steps { width: 15px; display: flex; flex-direction: column; gap: 1px; }
.steps button { flex: 1; background: #22272e; border: 1px solid #15181c; line-height: 6px; font-size: 9px; }
.size small, .stack small { display: block; font-size: 9px; line-height: 14px; color: #5b6067; }
.field { height: 19px; display: flex; align-items: center; gap: 4px; padding: 0 3px; background: #22272e; border: 1px solid #101317; }
.field input { flex: 1; font-weight: 700; color: #e7e9ec; }
.field input::placeholder { color: #e7e9ec; opacity: 1; }
.swatch { width: 17px; height: 12px; background: #0c0f14; }
.wheel { width: 11px; height: 11px; border-radius: 50%; background: conic-gradient(#f04a5c 0 25%, #7b6be8 0 40%, #3db5e8 0 60%, #f2c84b 0 80%, #ee6aa0 0); }
.link { padding-left: 7px; gap: 5px; }
.link .ic { width: 10px; height: 10px; color: #9da2a9; }
.stack { display: flex; flex-direction: column; gap: 3px; }
.drop { height: 93px; flex-direction: column; gap: 6px; background: #22272e; border: 1px solid #101317; color: #a3a8ae; }
.drop svg { width: 40px; height: 40px; fill: none; stroke: #a3a8ae; stroke-width: 3; }
.outline { height: 20px; flex: 1; border: 1px solid #2370ce; color: #2b83ee; font-weight: 500; }
.reset { width: 90px; }
.form hr { width: 100%; margin: 4px 0 6px; border: 0; border-top: 1px solid #282c32; }
.modes { display: grid; grid-template-columns: repeat(5, 1fr); gap: 4px; }
.modes button { height: 20px; background: #1f242a; border: 1px solid #101317; color: #a9aeb5; }
.modes .on { background: #2483ff; border-color: #2483ff; color: #fff; }
.spacing { width: 75px; }
.unit { position: absolute; right: 21px; line-height: 18px; color: #5b6067; }
.mark { width: 20px; margin-top: 5px; }
.pair { display: flex; }
.pair .outline + .outline { border-left: 0; }
.preview { width: 100%; height: auto; margin-top: 4px; }
.pv-title { font-size: 3px; font-weight: 700; fill: #fff; }
.pv-text { font-size: 2px; font-weight: 700; fill: #d5d9de; }
.pv-num { font-size: 4px; font-weight: 700; fill: #70f582; }
.pk { fill: #d9386f; }
.preview .region { stroke-width: 5; }
.watermark { position: absolute; right: 23px; bottom: 20px; font-size: 18px; line-height: 26px; font-weight: 300; color: #6c6f74; }
</style>
